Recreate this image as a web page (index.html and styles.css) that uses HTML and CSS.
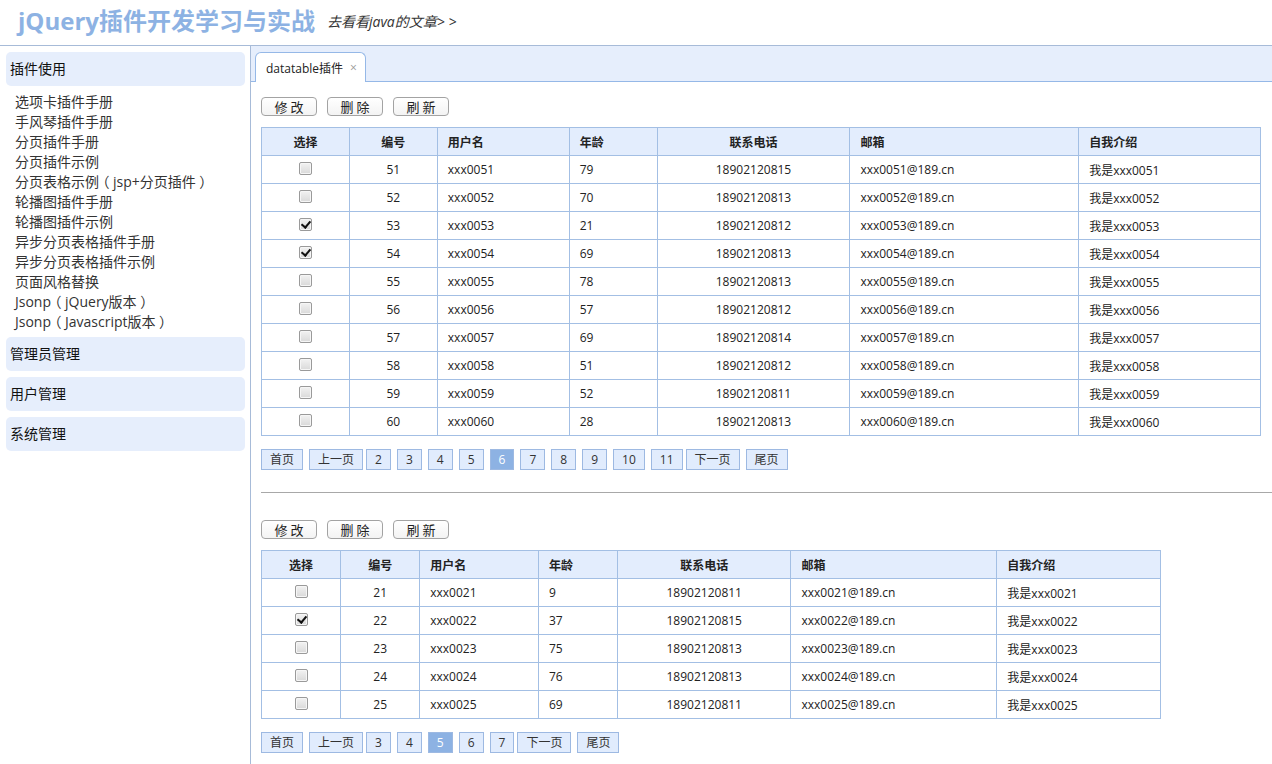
FILE: index.html
```html
<!DOCTYPE html>
<html lang="zh-CN">
<head>
<meta charset="utf-8">
<title>jQuery插件开发学习与实战</title>
<link rel="stylesheet" href="styles.css">
</head>
<body>
<div class="page">
  <header class="top">
    <h1 class="title">jQuery插件开发学习与实战</h1>
    <a class="ext-link" href="#">去看看java的文章&gt; &gt;</a>
  </header>
  <div class="main">
    <aside class="sidebar">
      <div class="acc-head">插件使用</div>
      <ul class="acc-list">
        <li>选项卡插件手册</li>
        <li>手风琴插件手册</li>
        <li>分页插件手册</li>
        <li>分页插件示例</li>
        <li>分页表格示例<span class="paren">（</span>jsp+分页插件<span class="paren">）</span></li>
        <li>轮播图插件手册</li>
        <li>轮播图插件示例</li>
        <li>异步分页表格插件手册</li>
        <li>异步分页表格插件示例</li>
        <li>页面风格替换</li>
        <li>Jsonp<span class="paren">（</span>jQuery版本<span class="paren">）</span></li>
        <li>Jsonp<span class="paren">（</span>Javascript版本<span class="paren">）</span></li>
      </ul>
      <div class="acc-head">管理员管理</div>
      <div class="acc-head">用户管理</div>
      <div class="acc-head">系统管理</div>
    </aside>
    <section class="workspace">
      <div class="tabs">
        <div class="tab"><span class="tab-title">datatable插件</span><span class="tab-close">×</span></div>
      </div>
      <div class="content">
        <div class="section">
          <div class="toolbar">
            <button class="btn">修 改</button>
            <button class="btn">删 除</button>
            <button class="btn">刷 新</button>
          </div>
          <table class="grid">
            <colgroup>
              <col class="c1"><col class="c2"><col class="c3"><col class="c4"><col class="c5"><col class="c6"><col class="c7">
            </colgroup>
            <thead>
              <tr><th class="ctr">选择</th><th class="ctr">编号</th><th>用户名</th><th>年龄</th><th class="ctr">联系电话</th><th>邮箱</th><th>自我介绍</th></tr>
            </thead>
            <tbody>
              <tr><td class="ctr"><input type="checkbox" class="cb"></td><td class="ctr">51</td><td>xxx0051</td><td>79</td><td class="ctr">18902120815</td><td>xxx0051@189.cn</td><td>我是xxx0051</td></tr>
              <tr><td class="ctr"><input type="checkbox" class="cb"></td><td class="ctr">52</td><td>xxx0052</td><td>70</td><td class="ctr">18902120813</td><td>xxx0052@189.cn</td><td>我是xxx0052</td></tr>
              <tr><td class="ctr"><input type="checkbox" class="cb" checked></td><td class="ctr">53</td><td>xxx0053</td><td>21</td><td class="ctr">18902120812</td><td>xxx0053@189.cn</td><td>我是xxx0053</td></tr>
              <tr><td class="ctr"><input type="checkbox" class="cb" checked></td><td class="ctr">54</td><td>xxx0054</td><td>69</td><td class="ctr">18902120813</td><td>xxx0054@189.cn</td><td>我是xxx0054</td></tr>
              <tr><td class="ctr"><input type="checkbox" class="cb"></td><td class="ctr">55</td><td>xxx0055</td><td>78</td><td class="ctr">18902120813</td><td>xxx0055@189.cn</td><td>我是xxx0055</td></tr>
              <tr><td class="ctr"><input type="checkbox" class="cb"></td><td class="ctr">56</td><td>xxx0056</td><td>57</td><td class="ctr">18902120812</td><td>xxx0056@189.cn</td><td>我是xxx0056</td></tr>
              <tr><td class="ctr"><input type="checkbox" class="cb"></td><td class="ctr">57</td><td>xxx0057</td><td>69</td><td class="ctr">18902120814</td><td>xxx0057@189.cn</td><td>我是xxx0057</td></tr>
              <tr><td class="ctr"><input type="checkbox" class="cb"></td><td class="ctr">58</td><td>xxx0058</td><td>51</td><td class="ctr">18902120812</td><td>xxx0058@189.cn</td><td>我是xxx0058</td></tr>
              <tr><td class="ctr"><input type="checkbox" class="cb"></td><td class="ctr">59</td><td>xxx0059</td><td>52</td><td class="ctr">18902120811</td><td>xxx0059@189.cn</td><td>我是xxx0059</td></tr>
              <tr><td class="ctr"><input type="checkbox" class="cb"></td><td class="ctr">60</td><td>xxx0060</td><td>28</td><td class="ctr">18902120813</td><td>xxx0060@189.cn</td><td>我是xxx0060</td></tr>
            </tbody>
          </table>
          <div class="pager">
            <a class="pg" href="#">首页</a>
            <a class="pg" href="#">上一页</a>
            <span class="nums">
              <a class="pg num" href="#">2</a>
              <a class="pg num" href="#">3</a>
              <a class="pg num" href="#">4</a>
              <a class="pg num" href="#">5</a>
              <a class="pg num active" href="#">6</a>
              <a class="pg num" href="#">7</a>
              <a class="pg num" href="#">8</a>
              <a class="pg num" href="#">9</a>
              <a class="pg num" href="#">10</a>
              <a class="pg num" href="#">11</a>
            </span>
            <a class="pg" href="#">下一页</a>
            <a class="pg" href="#">尾页</a>
          </div>
        </div>
        <hr class="divider">
        <div class="section second">
          <div class="toolbar">
            <button class="btn">修 改</button>
            <button class="btn">删 除</button>
            <button class="btn">刷 新</button>
          </div>
          <table class="grid narrow">
            <colgroup>
              <col class="c1"><col class="c2"><col class="c3"><col class="c4"><col class="c5"><col class="c6"><col class="c7">
            </colgroup>
            <thead>
              <tr><th class="ctr">选择</th><th class="ctr">编号</th><th>用户名</th><th>年龄</th><th class="ctr">联系电话</th><th>邮箱</th><th>自我介绍</th></tr>
            </thead>
            <tbody>
              <tr><td class="ctr"><input type="checkbox" class="cb"></td><td class="ctr">21</td><td>xxx0021</td><td>9</td><td class="ctr">18902120811</td><td>xxx0021@189.cn</td><td>我是xxx0021</td></tr>
              <tr><td class="ctr"><input type="checkbox" class="cb" checked></td><td class="ctr">22</td><td>xxx0022</td><td>37</td><td class="ctr">18902120815</td><td>xxx0022@189.cn</td><td>我是xxx0022</td></tr>
              <tr><td class="ctr"><input type="checkbox" class="cb"></td><td class="ctr">23</td><td>xxx0023</td><td>75</td><td class="ctr">18902120813</td><td>xxx0023@189.cn</td><td>我是xxx0023</td></tr>
              <tr><td class="ctr"><input type="checkbox" class="cb"></td><td class="ctr">24</td><td>xxx0024</td><td>76</td><td class="ctr">18902120813</td><td>xxx0024@189.cn</td><td>我是xxx0024</td></tr>
              <tr><td class="ctr"><input type="checkbox" class="cb"></td><td class="ctr">25</td><td>xxx0025</td><td>69</td><td class="ctr">18902120811</td><td>xxx0025@189.cn</td><td>我是xxx0025</td></tr>
            </tbody>
          </table>
          <div class="pager">
            <a class="pg" href="#">首页</a>
            <a class="pg" href="#">上一页</a>
            <span class="nums">
              <a class="pg num" href="#">3</a>
              <a class="pg num" href="#">4</a>
              <a class="pg num active" href="#">5</a>
              <a class="pg num" href="#">6</a>
              <a class="pg num" href="#">7</a>
            </span>
            <a class="pg" href="#">下一页</a>
            <a class="pg" href="#">尾页</a>
          </div>
        </div>
      </div>
    </section>
  </div>
</div>
</body>
</html>
```
FILE: styles.css
```css
* { box-sizing: border-box; }
html, body { margin: 0; padding: 0; }
body {
  font-family: "Open Sans", "Noto Sans CJK SC", sans-serif;
  font-size: 12px;
  color: #222;
  background: #fff;
  overflow: hidden;
}
.page {
  display: flex;
  flex-direction: column;
  height: 100vh;
}
.top {
  height: 46px;
  border-bottom: 1px solid #a7bbd8;
  display: flex;
  align-items: center;
  padding: 0 0 3px 18px;
  gap: 12px;
}
.title {
  margin: 0;
  font-size: 24px;
  font-weight: bold;
  color: #8db2e3;
  line-height: 30px;
}
.ext-link {
  font-size: 14px;
  font-style: italic;
  color: #333;
  text-decoration: none;
  line-height: 20px;
  margin-top: 2px;
}
.main {
  flex: 1;
  display: flex;
  min-height: 0;
}
.sidebar {
  width: 251px;
  flex: none;
  border-right: 1px solid #a7bbd8;
  padding: 6px 5px 0 6px;
}
.acc-head {
  height: 34px;
  line-height: 34px;
  background: #e6eefc;
  border-radius: 5px;
  padding-left: 4px;
  font-size: 14px;
  color: #111;
  margin-bottom: 6px;
}
.acc-list {
  list-style: none;
  margin: 0 0 5px 0;
  padding: 0 0 0 9px;
}
.acc-list li {
  font-size: 14px;
  height: 20px;
  line-height: 20px;
  color: #333;
  white-space: nowrap;
}
.paren {
  display: inline-block;
  width: 14px;
  height: 20px;
  line-height: 20px;
  vertical-align: top;
  text-align: center;
  font-feature-settings: "halt";
}
.workspace {
  flex: 1;
  min-width: 0;
  display: flex;
  flex-direction: column;
}
.tabs {
  height: 36px;
  background: #e6eefc;
  border-bottom: 1px solid #95b8e7;
  padding: 6px 0 0 4px;
  display: flex;
}
.tab {
  height: 30px;
  margin-bottom: -1px;
  background: #fff;
  border: 1px solid #95b8e7;
  border-bottom: none;
  border-radius: 6px 6px 0 0;
  padding: 0 8px 0 10px;
  display: flex;
  align-items: center;
  gap: 7px;
  font-size: 12px;
  color: #222;
}
.tab-close {
  color: #999;
  font-size: 12px;
}
.content {
  padding: 15px 0 0 10px;
}
.section {
  margin-right: 11px;
}
.toolbar {
  display: flex;
  gap: 10px;
  margin-bottom: 11px;
}
.btn {
  width: 56px;
  height: 19px;
  padding: 0;
  border: 1px solid #a3a3a3;
  border-radius: 4px;
  background: linear-gradient(#ffffff, #f3f3f3);
  font-family: "Noto Sans CJK SC", sans-serif;
  font-size: 13px;
  line-height: 17px;
  color: #222;
}
.grid {
  width: 100%;
  border-collapse: collapse;
  table-layout: fixed;
}
.grid.narrow { width: 90%; }
.c1, .c2, .c4 { width: 8.8%; }
.c3 { width: 13.2%; }
.c5 { width: 19.3%; }
.c6 { width: 22.9%; }
.c7 { width: 18.2%; }
.grid th, .grid td {
  border: 1px solid #a3bfe4;
  height: 28px;
  padding: 0 0 0 10px;
  text-align: left;
  font-size: 12px;
  white-space: nowrap;
}
.grid th {
  background: #e3edfd;
  font-weight: bold;
  color: #222;
}
.grid .ctr {
  text-align: center;
  padding: 0;
}
.cb {
  appearance: none;
  -webkit-appearance: none;
  width: 13px;
  height: 13px;
  margin: 0 0 4px 0;
  vertical-align: middle;
  border: 1px solid #9a9a9a;
  border-radius: 2px;
  background: linear-gradient(#f2f2f2, #d9d9d9);
  box-shadow: inset 0 0 0 1px #f6f6f6;
  position: relative;
}
.cb:checked::after {
  content: "";
  position: absolute;
  left: 3px;
  top: 0px;
  width: 4px;
  height: 7px;
  border: solid #111;
  border-width: 0 2px 2px 0;
  transform: rotate(40deg);
}
.pager {
  display: flex;
  margin-top: 13px;
}
.pg {
  display: block;
  height: 21px;
  line-height: 19px;
  padding: 0 8px;
  border: 1px solid #9db9e2;
  background: #e1ecfd;
  color: #333;
  text-decoration: none;
  font-size: 12px;
  margin-right: 6px;
}
.nums {
  display: flex;
  gap: 6px;
  margin: 0 3px 0 -3px;
}
.nums .pg { margin-right: 0; }
.pg.active {
  background: #8db2e3;
  color: #fff;
}
.divider {
  margin: 22px 0 27px 0;
  border: none;
  border-top: 1px solid #a8a8a8;
  height: 0;
}
```
